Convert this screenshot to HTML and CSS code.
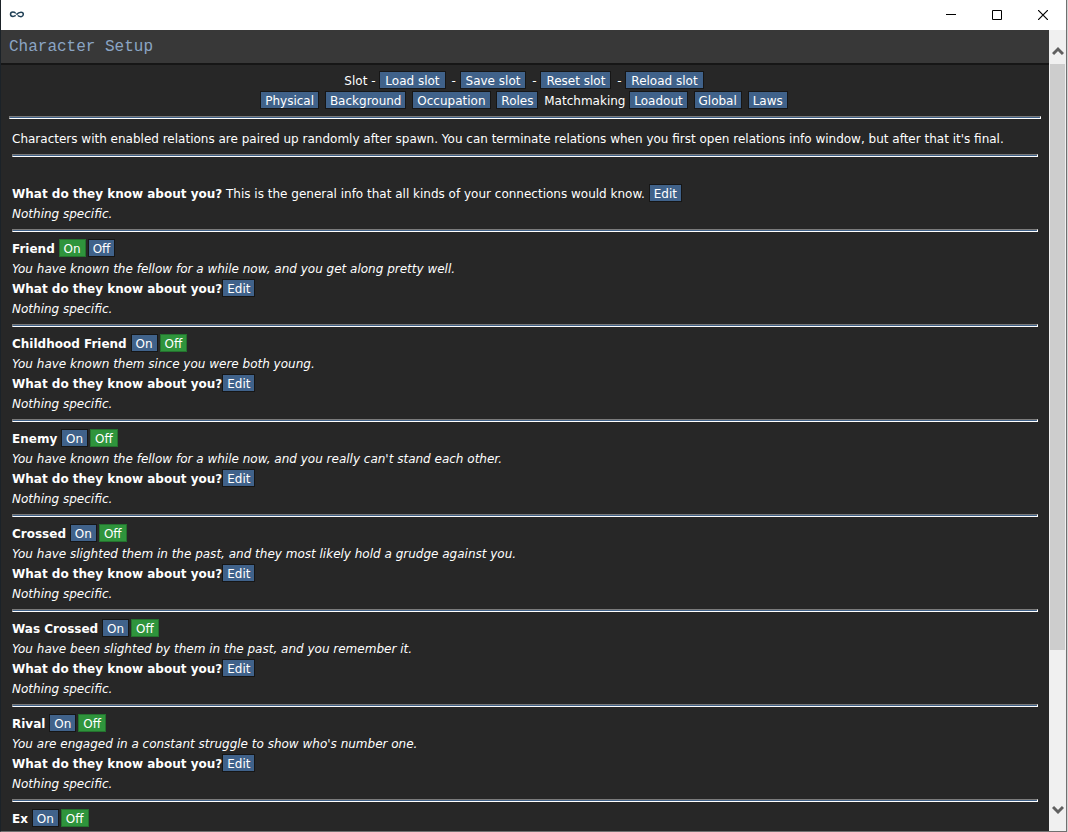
FILE: index.html
```html
<!DOCTYPE html>
<html lang="en">
<head>
  <meta charset="UTF-8">
  <meta name="viewport" content="width=device-width, initial-scale=1">
  <title>Character Setup</title>
  <link rel="stylesheet" href="styles.css">
</head>
<body>

<div class="window">
  <div class="titlebar">
    <svg class="logo" width="16" height="8" viewBox="0 0 16 8" fill="none" stroke="#1f3f55">
      <path d="M6.500 1.800C5.500 1 4.600 .9 3.800 .9 2.200 .9 1.500 2 1.500 3.200S2.600 5.400 4 5.400c1.200 0 2-.5 2.700-1" stroke-width="1.500"/>
      <path d="M6 2.200C7.200 2.600 8.200 4 9.500 5" stroke="#6d8596" stroke-width="1"/>
      <path d="M7.500 3.600C9 1.800 10.500 1.200 12 1.200c1.500 0 2.300 .9 2.300 2S13.300 5.700 12 5.700c-1.200 0-2-.3-3-1" stroke-width="1.500"/>
    </svg>
    <div class="window-buttons">
      <button aria-label="Minimize"><svg width="10" height="10" viewBox="0 0 10 10"><path d="M0 4.500H10" stroke="#000"/></svg></button>
      <button aria-label="Maximize"><svg width="10" height="10" viewBox="0 0 10 10"><path d="M.5 .5H9.500V9.500H.5Z" fill="none" stroke="#000"/></svg></button>
      <button aria-label="Close"><svg width="10" height="10" viewBox="0 0 10 10"><path d="M0 0L10 10M10 0L0 10" stroke="#000" stroke-width="1.200"/></svg></button>
    </div>
  </div>

  <div class="main">
    <div class="page">
      <h1>Character Setup</h1>
      <div class="content">
        <div class="menu">
          <div class="slots">Slot - <button>Load slot</button> - <button>Save slot</button> - <button>Reset slot</button> - <button>Reload slot</button></div>
          <button>Physical</button> <button>Background</button> <button>Occupation</button> <button>Roles</button> Matchmaking <button>Loadout</button> <button>Global</button> <button>Laws</button>
        </div>
        <hr>
        <div class="relations">
          Characters with enabled relations are paired up randomly after spawn. You can terminate relations when you first open relations info window, but after that it's final.
          <hr>
          <br>
          <b>What do they know about you?</b> This is the general info that all kinds of your connections would know. <button>Edit</button><br>
          <i>Nothing specific.</i>
          <hr>
          <b>Friend</b> <button class="on">On</button><button>Off</button><br>
          <i>You have known the fellow for a while now, and you get along pretty well.</i><br>
          <b>What do they know about you?</b><button>Edit</button><br>
          <i>Nothing specific.</i>
          <hr>
          <b>Childhood Friend</b> <button>On</button><button class="on">Off</button><br>
          <i>You have known them since you were both young.</i><br>
          <b>What do they know about you?</b><button>Edit</button><br>
          <i>Nothing specific.</i>
          <hr>
          <b>Enemy</b> <button>On</button><button class="on">Off</button><br>
          <i>You have known the fellow for a while now, and you really can't stand each other.</i><br>
          <b>What do they know about you?</b><button>Edit</button><br>
          <i>Nothing specific.</i>
          <hr>
          <b>Crossed</b> <button>On</button><button class="on">Off</button><br>
          <i>You have slighted them in the past, and they most likely hold a grudge against you.</i><br>
          <b>What do they know about you?</b><button>Edit</button><br>
          <i>Nothing specific.</i>
          <hr>
          <b>Was Crossed</b> <button>On</button><button class="on">Off</button><br>
          <i>You have been slighted by them in the past, and you remember it.</i><br>
          <b>What do they know about you?</b><button>Edit</button><br>
          <i>Nothing specific.</i>
          <hr>
          <b>Rival</b> <button>On</button><button class="on">Off</button><br>
          <i>You are engaged in a constant struggle to show who's number one.</i><br>
          <b>What do they know about you?</b><button>Edit</button><br>
          <i>Nothing specific.</i>
          <hr>
          <b>Ex</b> <button>On</button><button class="on">Off</button>
        </div>
      </div>
    </div>

    <div class="scrollbar">
      <button class="up" aria-label="Scroll up"><svg width="12" height="10" viewBox="0 0 12 10"><path d="M1 8L6 3L11 8" fill="none" stroke="#606060" stroke-width="3"/></svg></button>
      <div class="track"><div class="thumb"></div></div>
      <button class="down" aria-label="Scroll down"><svg width="12" height="10" viewBox="0 0 12 10"><path d="M1 2L6 7L11 2" fill="none" stroke="#606060" stroke-width="3"/></svg></button>
    </div>
  </div>
</div>

</body>
</html>
```
FILE: styles.css
```css
* {
  box-sizing: border-box;
}
body {
  margin: 0;
  height: 100vh;
  padding-right: 1px;
  background: #d4d4d4;
  color: white;
  font-family: Verdana, "DejaVu Sans", sans-serif;
  font-size: 12px;
  line-height: 20px;
  overflow: hidden;
}
.window {
  display: flex;
  flex-direction: column;
  height: 100%;
  border: 1px solid #707070;
  border-top: none;
  border-left-color: #1b2228;
}
.titlebar {
  display: flex;
  justify-content: space-between;
  align-items: center;
  flex: none;
  height: 30px;
  padding-left: 8px;
  background: white;
}
.window-buttons {
  display: flex;
}
.window-buttons button {
  display: flex;
  justify-content: center;
  align-items: center;
  width: 46px;
  height: 28px;
  padding: 0;
  border: none;
  background: none;
}
.main {
  display: flex;
  flex: 1;
  min-height: 0;
}
.page {
  flex: 1;
  background: #272727;
  overflow: hidden;
}
h1 {
  margin: 0;
  height: 35px;
  padding: 0 8px;
  border-bottom: 2px solid #161616;
  background: #383838;
  color: #8ba5c4;
  font: 16px/35px "Courier New", "Liberation Mono", monospace;
}
.content {
  padding: 6px 8px;
}
.menu {
  text-align: center;
}
.relations {
  padding: 3px;
}
hr {
  height: 3px;
  margin: 5px 0 7px;
  border: 1px solid;
  border-color: #7b7b7b white white #7b7b7b;
  background: #40628a;
}
.content button {
  height: 18px;
  margin: 0 2px 0 0;
  padding: 2px 4px 0;
  border: 1px solid #161616;
  background: #40628a;
  color: white;
  font: inherit;
  line-height: 14px;
  vertical-align: top;
}
.content .slots button {
  padding: 2px 5px 0;
}
.content button.on {
  border-color: #24722e;
  background: #2f943c;
}
.scrollbar {
  display: flex;
  flex-direction: column;
  width: 17px;
  background: #f0f0f0;
}
.scrollbar button {
  display: flex;
  justify-content: center;
  align-items: center;
  height: 34px;
  padding: 0;
  border: none;
  background: none;
}
.scrollbar .up {
  padding-top: 8px;
}
.scrollbar .down {
  padding-bottom: 9px;
}
.track {
  flex: 1;
}
.thumb {
  height: 80%;
  margin: 0 1px;
  background: #cdcdcd;
}
```
